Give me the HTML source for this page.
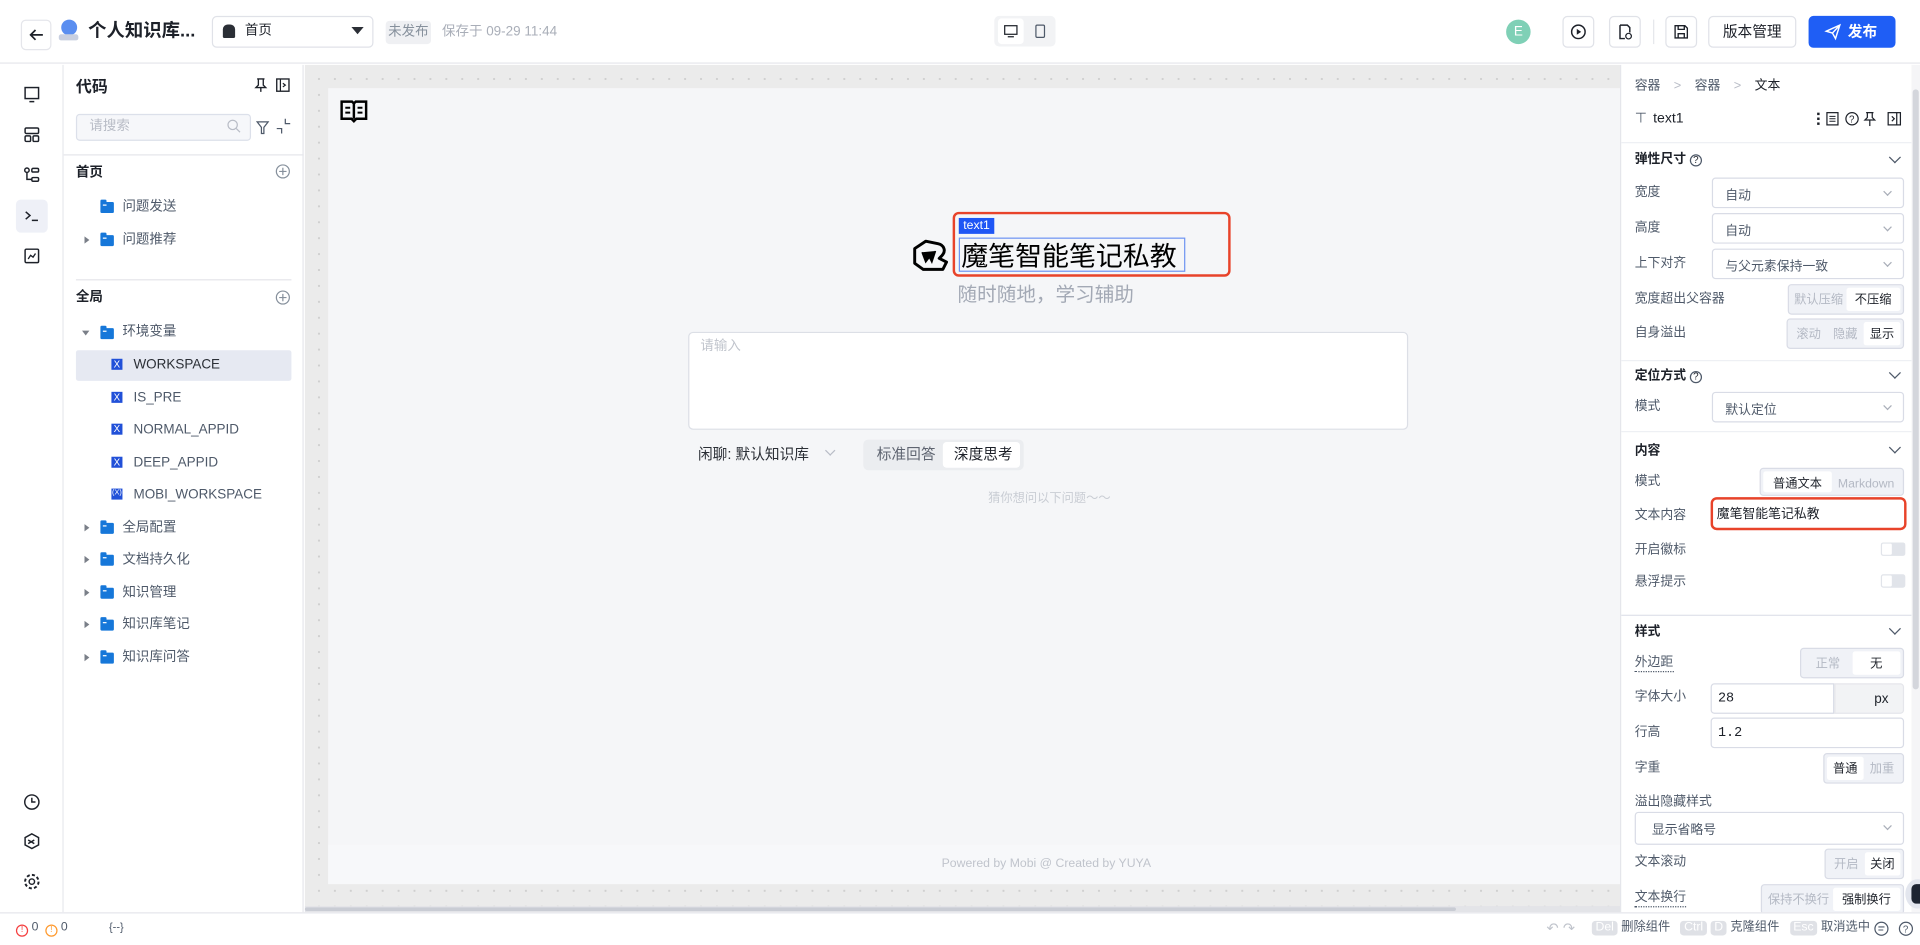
<!DOCTYPE html>
<html><head><meta charset="utf-8">
<style>
*{box-sizing:border-box;margin:0;padding:0}
html,body{width:1920px;height:945px;overflow:hidden;background:#fff}
body{font-family:"Liberation Sans","Noto Sans CJK SC",sans-serif;color:#1d2129}
#w{position:absolute;left:0;top:0;width:1568px;height:772px;transform:scale(1.22449);transform-origin:0 0;font-size:12px}
.a{position:absolute}
.t{position:absolute;white-space:nowrap;line-height:1}
.lbl{position:absolute;left:11px;color:#4e5969;font-size:10.5px;white-space:nowrap;line-height:1}
.sel{position:absolute;left:74px;width:157px;height:25px;border:1px solid #d9dce6;border-radius:3px;color:#4e5969;font-size:10.5px;padding:6px 10px;white-space:nowrap}
.sel:after{content:"";position:absolute;right:10px;top:8px;width:4px;height:4px;border-right:1px solid #a9aeb8;border-bottom:1px solid #a9aeb8;transform:rotate(45deg)}
.seg{position:absolute;height:25px;border:1px solid #d9dce6;background:#f0f2f7;border-radius:3px;display:flex;padding:2px;font-size:10px;color:#b4b9c4}
.seg span{flex:1;text-align:center;padding:4px 0;white-space:nowrap;line-height:13px}
.seg .on{background:#fff;color:#1d2129;border-radius:2px}
.sec{position:absolute;left:11px;font-weight:bold;font-size:10.5px;color:#1d2129;white-space:nowrap;line-height:1}
.chev{position:absolute;left:220px;width:7px;height:7px;border-right:1.3px solid #4e5969;border-bottom:1.3px solid #4e5969;transform:rotate(45deg)}
.q{display:inline-block;width:10px;height:10px;border:1px solid #4e5969;border-radius:50%;font-size:8px;text-align:center;line-height:8px;font-weight:normal;margin-left:3px;vertical-align:0}
.ti{position:absolute;font-size:11px;color:#4e5969;white-space:nowrap;line-height:1}
.fold{position:absolute;width:11px;height:9px;background:#1677d9;border-radius:1px}
.fold:before{content:"";position:absolute;left:0;top:-2px;width:5px;height:3px;background:#1677d9;border-radius:1px 1px 0 0}
.fold:after{content:"";position:absolute;left:2px;top:2px;width:3px;height:1px;background:#fff}
.arr{position:absolute;width:0;height:0;border-top:3px solid transparent;border-bottom:3px solid transparent;border-left:4px solid #7a7f88}
.xi{position:absolute;left:91px;width:9px;height:9px;background:#2150d8;color:#fff;font-size:8px;line-height:9px;text-align:center}
.kbd{display:inline-block;background:#dfe1e6;color:#fff;border-radius:3px;padding:1px 3px;font-size:10px;margin-right:3px}
</style></head><body><div id="w">

<!-- header -->
<div class="a" style="left:0;top:0;width:1568px;height:52px;border-bottom:1px solid #e5e6eb;background:#fff"></div>
<div class="a" style="left:17px;top:16px;width:25px;height:25px;border:1px solid #e5e6eb;border-radius:4px"></div>
<svg class="a" style="left:22px;top:21px" width="15" height="15" viewBox="0 0 15 15"><path d="M13 7.5H3M7 3.5L3 7.5l4 4" stroke="#1d2129" stroke-width="1.4" fill="none"/></svg>
<div class="a" style="left:50px;top:16px;width:13px;height:13px;border-radius:50%;background:#5a8ef0"></div>
<div class="a" style="left:48px;top:28px;width:16px;height:5px;border-radius:2px;background:#c8cfe0"></div>
<div class="t" style="left:72px;top:18px;font-size:15px;font-weight:bold">个人知识库...</div>
<div class="a" style="left:173px;top:13px;width:132px;height:26px;border:1px solid #e0e2e8;border-radius:4px"></div>
<div class="a" style="left:182px;top:20px;width:10px;height:11px;background:#2b2f36;border-radius:4px 4px 1px 1px"></div>
<div class="t" style="left:200px;top:20px;font-size:11px">首页</div>
<div class="a" style="left:287px;top:22px;border-left:5px solid transparent;border-right:5px solid transparent;border-top:6px solid #2b2f36"></div>
<div class="a" style="left:315px;top:17px;width:37px;height:19px;background:#eff0f3;border-radius:3px;color:#86909c;font-size:11px;line-height:19px;text-align:center">未发布</div>
<div class="t" style="left:361px;top:21px;font-size:11px;color:#a9aeb8">保存于 09-29 11:44</div>
<div class="a" style="left:812px;top:13px;width:50px;height:25px;background:#f2f3f5;border-radius:4px"></div>
<div class="a" style="left:815px;top:15px;width:21px;height:21px;background:#fff;border-radius:3px"></div>
<svg class="a" style="left:819px;top:19px" width="13" height="13" viewBox="0 0 13 13"><rect x="1.5" y="2" width="10" height="7" fill="none" stroke="#1d2129"/><path d="M4 11h5" stroke="#1d2129"/></svg>
<svg class="a" style="left:843px;top:19px" width="13" height="13" viewBox="0 0 13 13"><rect x="3" y="1.5" width="7" height="10" rx="1" fill="none" stroke="#4e5969"/></svg>
<div class="a" style="left:1230px;top:16px;width:20px;height:20px;border-radius:50%;background:#7fd0b6;color:#fff;font-size:11px;text-align:center;line-height:20px">E</div>
<div class="a" style="left:1276px;top:13px;width:26px;height:26px;border:1px solid #e0e2e8;border-radius:4px"></div>
<svg class="a" style="left:1282px;top:19px" width="14" height="14" viewBox="0 0 14 14"><circle cx="7" cy="7" r="5.5" fill="none" stroke="#1d2129" stroke-width="1.2"/><path d="M5.7 4.6v4.8l3.6-2.4z" fill="#1d2129"/></svg>
<div class="a" style="left:1314px;top:13px;width:26px;height:26px;border:1px solid #e0e2e8;border-radius:4px"></div>
<svg class="a" style="left:1320px;top:19px" width="14" height="14" viewBox="0 0 14 14"><path d="M3 1.5h6l2 2v4M3 1.5v11h4" fill="none" stroke="#1d2129" stroke-width="1.2"/><circle cx="10" cy="10.5" r="2.3" fill="none" stroke="#1d2129"/></svg>
<div class="a" style="left:1350px;top:16px;width:1px;height:20px;background:#e5e6eb"></div>
<div class="a" style="left:1360px;top:13px;width:26px;height:26px;border:1px solid #e0e2e8;border-radius:4px"></div>
<svg class="a" style="left:1366px;top:19px" width="14" height="14" viewBox="0 0 14 14"><path d="M2 2h8l2 2v8H2z M4.5 2v3h5V2 M4.5 12V8.5h5V12" fill="none" stroke="#1d2129" stroke-width="1.1"/></svg>
<div class="a" style="left:1395px;top:13px;width:72px;height:26px;border:1px solid #e0e2e8;border-radius:4px;font-size:12px;text-align:center;line-height:24px">版本管理</div>
<div class="a" style="left:1477px;top:13px;width:71px;height:26px;background:#1f5ef5;border-radius:4px;color:#fff;font-size:12px;font-weight:bold;line-height:26px;padding-left:32px">发布</div>
<svg class="a" style="left:1490px;top:19px" width="14" height="14" viewBox="0 0 14 14"><path d="M1.5 6.5L12.5 1.5 9 12.5 6.5 8z M6.5 8l6-6.5" fill="none" stroke="#fff" stroke-width="1.2"/></svg>

<!-- left rail -->
<div class="a" style="left:0;top:53px;width:52px;height:692px;border-right:1px solid #e5e6eb"></div>
<div class="a" style="left:13px;top:163px;width:26px;height:27px;background:#eef0f7;border-radius:4px"></div>
<svg class="a" style="left:18px;top:69px" width="16" height="16" viewBox="0 0 16 16"><rect x="2.5" y="2.5" width="11" height="9" fill="none" stroke="#1d2129" stroke-width="1.2"/><path d="M6 14h4" stroke="#1d2129" stroke-width="1.2"/></svg>
<svg class="a" style="left:18px;top:102px" width="16" height="16" viewBox="0 0 16 16"><rect x="2.5" y="2.5" width="11" height="4.5" rx="1" fill="none" stroke="#1d2129" stroke-width="1.2"/><rect x="2.5" y="9" width="4.5" height="4.5" rx="1" fill="none" stroke="#1d2129" stroke-width="1.2"/><rect x="9" y="9" width="4.5" height="4.5" rx="1" fill="none" stroke="#1d2129" stroke-width="1.2"/></svg>
<svg class="a" style="left:18px;top:135px" width="16" height="16" viewBox="0 0 16 16"><circle cx="4" cy="4" r="1.8" fill="none" stroke="#1d2129" stroke-width="1.2"/><rect x="8" y="2.5" width="5.5" height="3" rx="1" fill="none" stroke="#1d2129" stroke-width="1.2"/><rect x="8" y="10" width="5.5" height="3" rx="1" fill="none" stroke="#1d2129" stroke-width="1.2"/><path d="M4 6v5.5h4" fill="none" stroke="#1d2129" stroke-width="1.2"/></svg>
<svg class="a" style="left:18px;top:168px" width="16" height="16" viewBox="0 0 16 16"><path d="M3 5l3.5 3L3 11M8 12h5" fill="none" stroke="#1d2129" stroke-width="1.2"/></svg>
<svg class="a" style="left:18px;top:201px" width="16" height="16" viewBox="0 0 16 16"><rect x="2.5" y="2.5" width="11" height="11" rx="1" fill="none" stroke="#1d2129" stroke-width="1.2"/><path d="M5 10.5l2-3 2 1.5 2-3" fill="none" stroke="#1d2129" stroke-width="1.1"/></svg>
<svg class="a" style="left:18px;top:647px" width="16" height="16" viewBox="0 0 16 16"><circle cx="8" cy="8" r="5.8" fill="none" stroke="#1d2129" stroke-width="1.2"/><path d="M8 4.5V8h3" fill="none" stroke="#1d2129" stroke-width="1.2"/></svg>
<svg class="a" style="left:18px;top:679px" width="16" height="16" viewBox="0 0 16 16"><path d="M8 2l5.5 3v6L8 14l-5.5-3V5z M5 7l5 3M5 10l5-3" fill="none" stroke="#1d2129" stroke-width="1.2"/></svg>
<svg class="a" style="left:18px;top:712px" width="16" height="16" viewBox="0 0 16 16"><circle cx="8" cy="8" r="2.2" fill="none" stroke="#1d2129" stroke-width="1.2"/><circle cx="8" cy="8" r="5.5" fill="none" stroke="#1d2129" stroke-width="1.6" stroke-dasharray="2.5 1.8"/></svg>

<!-- left panel -->
<div class="a" style="left:52px;top:53px;width:196px;height:692px;border-right:1px solid #e5e6eb;background:#fff"></div>
<div class="t" style="left:62px;top:64px;font-size:13px;font-weight:bold">代码</div>
<svg class="a" style="left:207px;top:63px" width="12" height="13" viewBox="0 0 12 13"><path d="M3 1.5h6M4 1.5v5l-2 2h8l-2-2v-5M6 8.5V12" fill="none" stroke="#1d2129" stroke-width="1.1"/></svg>
<svg class="a" style="left:225px;top:63px" width="12" height="13" viewBox="0 0 12 13"><rect x="1" y="1.5" width="10" height="10" fill="none" stroke="#1d2129" stroke-width="1.1"/><path d="M4 1.5v10M6 5l2 1.5L6 8" fill="none" stroke="#1d2129"/></svg>
<div class="a" style="left:62px;top:93px;width:143px;height:22px;border:1px solid #dce0ea;border-radius:3px;background:#f6f7fa"></div>
<div class="t" style="left:73px;top:98px;font-size:11px;color:#b8bcc6">请搜索</div>
<svg class="a" style="left:185px;top:97px" width="12" height="12" viewBox="0 0 12 12"><circle cx="5" cy="5" r="3.8" fill="none" stroke="#b8bcc6"/><path d="M8 8l3 3" stroke="#b8bcc6"/></svg>
<svg class="a" style="left:209px;top:98px" width="11" height="12" viewBox="0 0 11 12"><path d="M1 1.5h9L6.5 6v5h-2V6z" fill="none" stroke="#4e5969"/></svg>
<svg class="a" style="left:225px;top:96px" width="13" height="14" viewBox="0 0 13 14"><path d="M8 1v4h4M5 13V9H1" fill="none" stroke="#4e5969"/></svg>
<div class="a" style="left:52px;top:126px;width:196px;height:1px;background:#e5e6eb"></div>
<div class="t" style="left:62px;top:136px;font-size:11px;font-weight:bold">首页</div>
<svg class="a" style="left:225px;top:134px" width="12" height="12" viewBox="0 0 12 12"><circle cx="6" cy="6" r="5.3" fill="none" stroke="#86909c"/><path d="M6 3v6M3 6h6" stroke="#86909c"/></svg>
<div class="fold" style="left:82px;top:165px"></div><div class="ti" style="left:100px;top:164px">问题发送</div>
<div class="arr" style="left:69px;top:193px"></div><div class="fold" style="left:82px;top:192px"></div><div class="ti" style="left:100px;top:191px">问题推荐</div>
<div class="a" style="left:62px;top:228px;width:176px;height:1px;background:#e5e6eb"></div>
<div class="t" style="left:62px;top:238px;font-size:11px;font-weight:bold">全局</div>
<svg class="a" style="left:225px;top:237px" width="12" height="12" viewBox="0 0 12 12"><circle cx="6" cy="6" r="5.3" fill="none" stroke="#86909c"/><path d="M6 3v6M3 6h6" stroke="#86909c"/></svg>
<div class="a" style="left:67px;top:270px;border-left:3px solid transparent;border-right:3px solid transparent;border-top:4px solid #7a7f88"></div>
<div class="fold" style="left:82px;top:268px"></div><div class="ti" style="left:100px;top:266px">环境变量</div>
<div class="a" style="left:62px;top:286px;width:176px;height:25px;background:#e6e9f2;border-radius:2px"></div>
<div class="xi" style="top:293px">X</div><div class="ti" style="left:109px;top:293px;color:#2b2f36">WORKSPACE</div>
<div class="xi" style="top:320px">X</div><div class="ti" style="left:109px;top:320px">IS_PRE</div>
<div class="xi" style="top:346px">X</div><div class="ti" style="left:109px;top:346px">NORMAL_APPID</div>
<div class="xi" style="top:373px">X</div><div class="ti" style="left:109px;top:373px">DEEP_APPID</div>
<div class="xi" style="top:399px;font-size:6px">(X)</div><div class="ti" style="left:109px;top:399px">MOBI_WORKSPACE</div>
<div class="arr" style="left:69px;top:428px"></div><div class="fold" style="left:82px;top:427px"></div><div class="ti" style="left:100px;top:426px">全局配置</div>
<div class="arr" style="left:69px;top:454px"></div><div class="fold" style="left:82px;top:453px"></div><div class="ti" style="left:100px;top:452px">文档持久化</div>
<div class="arr" style="left:69px;top:481px"></div><div class="fold" style="left:82px;top:480px"></div><div class="ti" style="left:100px;top:479px">知识管理</div>
<div class="arr" style="left:69px;top:507px"></div><div class="fold" style="left:82px;top:506px"></div><div class="ti" style="left:100px;top:505px">知识库笔记</div>
<div class="arr" style="left:69px;top:534px"></div><div class="fold" style="left:82px;top:533px"></div><div class="ti" style="left:100px;top:532px">知识库问答</div>

<!-- canvas -->
<div class="a" style="left:249px;top:53px;width:1074px;height:692px;background-color:#ebebeb;background-image:radial-gradient(#cfcfcf 0.8px,transparent 1px);background-size:13px 13px;background-position:5px 5px"></div>
<div class="a" style="left:268px;top:72px;width:1055px;height:650px;background:#f5f6f8"></div>
<div class="a" style="left:268px;top:690px;width:1055px;height:32px;background:#f7f8fa"></div>
<div class="a" style="left:249px;top:740px;width:1074px;height:5px;background:#e3e4e8"></div>
<div class="a" style="left:249px;top:741px;width:940px;height:3px;background:#c9ccd4;border-radius:2px"></div>
<svg class="a" style="left:277px;top:81px" width="24" height="20" viewBox="0 0 24 20"><path d="M2 2h8.5l1.5 1.5L13.5 2H22v14h-8l-2 2-2-2H2z M12 3.5V16" fill="none" stroke="#000" stroke-width="2"/><path d="M5 7h4M5 11h4M15 7h4M15 11h4" stroke="#000" stroke-width="1.6"/></svg>
<svg class="a" style="left:745px;top:194px" width="31" height="29" viewBox="0 0 31 29"><path d="M2 9l9-6 10 2c5 1 7 6 3 10l-2 2 6 3-3 6H9l-7-5z" fill="none" stroke="#000" stroke-width="2.4" stroke-linejoin="round"/><path d="M8 12l3 8 3-4 2 4 3-9" fill="#000" stroke="#000" stroke-width="1.2"/></svg>
<div class="a" style="left:778px;top:173px;width:227px;height:53px;border:2px solid #e8432a;border-radius:5px"></div>
<div class="a" style="left:783px;top:178px;width:29px;height:13px;background:#1f56f5;color:#fff;font-size:10px;line-height:13px;text-align:center">text1</div>
<div class="a" style="left:783px;top:194px;width:185px;height:28px;border:1px solid #6f95f2"></div>
<div class="t" style="left:785px;top:195px;font-size:22px;color:#000;font-family:'Noto Sans CJK SC',sans-serif;line-height:26px">魔笔智能笔记私教</div>
<div class="t" style="left:782px;top:234px;font-size:16px;color:#a3a9b5">随时随地，学习辅助</div>
<div class="a" style="left:562px;top:271px;width:588px;height:80px;background:#fff;border:1px solid #dcdfe6;border-radius:4px"></div>
<div class="t" style="left:572px;top:278px;font-size:11px;color:#c0c4cc">请输入</div>
<div class="t" style="left:570px;top:365px;font-size:12px;color:#2b2f36">闲聊: 默认知识库</div>
<div class="a" style="left:675px;top:365px;width:6px;height:6px;border-right:1px solid #b8bcc6;border-bottom:1px solid #b8bcc6;transform:rotate(45deg)"></div>
<div class="a" style="left:705px;top:359px;width:131px;height:25px;background:#ebedf0;border-radius:4px"></div>
<div class="t" style="left:716px;top:365px;font-size:12px;color:#5e6470">标准回答</div>
<div class="a" style="left:770px;top:361px;width:63px;height:21px;background:#fff;border-radius:3px"></div>
<div class="t" style="left:779px;top:365px;font-size:12px;color:#1d2129">深度思考</div>
<div class="t" style="left:807px;top:403px;font-size:10px;color:#c9cdd4">猜你想问以下问题～～</div>
<div class="t" style="left:769px;top:701px;font-size:10px;color:#c0c4cc">Powered by Mobi @ Created by YUYA</div>

<!-- right panel -->
<div class="a" style="left:1323px;top:53px;width:245px;height:692px;background:#fff;border-left:1px solid #e5e6eb">
 <div class="t" style="left:11px;top:12px;font-size:10.5px;color:#4e5969">容器 <span style="color:#b8bcc6;margin:0 8px">&gt;</span> 容器 <span style="color:#b8bcc6;margin:0 8px">&gt;</span> <span style="color:#1d2129">文本</span></div>
 <div class="t" style="left:11px;top:39px;font-size:11.5px;color:#1d2129"><span style="color:#4e5969;margin-right:5px">⊤</span>text1</div>
 <div class="a" style="left:160px;top:39px;width:2px;height:2px;background:#1d2129;box-shadow:0 4px 0 #1d2129,0 8px 0 #1d2129"></div>
 <svg class="a" style="left:167px;top:38px" width="72" height="12" viewBox="0 0 72 12"><rect x="1" y="1" width="9" height="10" fill="none" stroke="#1d2129"/><path d="M3 4h5M3 6h5M3 8h5" stroke="#1d2129" stroke-width=".8"/><circle cx="21.5" cy="6" r="5" fill="none" stroke="#1d2129"/><text x="19" y="9" font-size="8" fill="#1d2129" font-family="Liberation Sans">?</text><path d="M33 1h6M34 1v4l-2 2h8l-2-2V1M36 7v5" fill="none" stroke="#1d2129"/><rect x="51" y="1" width="10" height="10" fill="none" stroke="#1d2129"/><path d="M58 1v10M54 4l2 2-2 2" fill="none" stroke="#1d2129"/></svg>
 <div class="a" style="left:0;top:63px;width:237px;height:1px;background:#eef0f4"></div>
 <div class="sec" style="top:72px">弹性尺寸<span class="q">?</span></div><div class="chev" style="top:72px"></div>
 <div class="lbl" style="top:99px">宽度</div><div class="sel" style="top:92px">自动</div>
 <div class="lbl" style="top:128px">高度</div><div class="sel" style="top:121px">自动</div>
 <div class="lbl" style="top:157px">上下对齐</div><div class="sel" style="top:150px">与父元素保持一致</div>
 <div class="lbl" style="top:186px">宽度超出父容器</div><div class="seg" style="left:136px;top:179px;width:95px"><span>默认压缩</span><span class="on">不压缩</span></div>
 <div class="lbl" style="top:214px">自身溢出</div><div class="seg" style="left:135px;top:207px;width:96px"><span>滚动</span><span>隐藏</span><span class="on">显示</span></div>
 <div class="a" style="left:0;top:241px;width:237px;height:1px;background:#eef0f4"></div>
 <div class="sec" style="top:249px">定位方式<span class="q">?</span></div><div class="chev" style="top:248px"></div>
 <div class="lbl" style="top:274px">模式</div><div class="sel" style="top:267px">默认定位</div>
 <div class="a" style="left:0;top:299px;width:237px;height:1px;background:#eef0f4"></div>
 <div class="sec" style="top:310px">内容</div><div class="chev" style="top:309px"></div>
 <div class="lbl" style="top:335px">模式</div><div class="seg" style="left:113px;top:329px;width:118px;height:23px"><span class="on">普通文本</span><span>Markdown</span></div>
 <div class="a" style="left:73px;top:353px;width:160px;height:27px;border:2.5px solid #e8432a;border-radius:5px"></div>
 <div class="lbl" style="top:363px">文本内容</div><div class="t" style="left:78px;top:362px;font-size:10.5px;color:#1d2129">魔笔智能笔记私教</div>
 <div class="lbl" style="top:391px">开启徽标</div><div class="a" style="left:212px;top:390px;width:20px;height:11px;background:#e1e4ea;border-radius:2px"><div class="a" style="left:1px;top:1px;width:8px;height:9px;background:#fff;border-radius:1px"></div></div>
 <div class="lbl" style="top:417px">悬浮提示</div><div class="a" style="left:212px;top:416px;width:20px;height:11px;background:#e1e4ea;border-radius:2px"><div class="a" style="left:1px;top:1px;width:8px;height:9px;background:#fff;border-radius:1px"></div></div>
 <div class="a" style="left:0;top:449px;width:237px;height:1px;background:#dfe2ea"></div>
 <div class="sec" style="top:458px">样式</div><div class="chev" style="top:457px"></div>
 <div class="lbl" style="top:483px;border-bottom:1px dotted #4e5969;padding-bottom:1px">外边距</div>
 <div class="t" style="left:165px;top:483px;font-size:11px;color:#b8bcc6;font-style:italic">fx</div>
 <div class="seg" style="left:146px;top:476px;width:85px"><span>正常</span><span class="on">无</span></div>
 <div class="lbl" style="top:511px">字体大小</div>
 <div class="a" style="left:73px;top:505px;width:101px;height:25px;border:1px solid #d9dce6;border-radius:3px 0 0 3px;font-family:'Liberation Mono',monospace;font-size:11px;padding:6px 5px">28</div>
 <div class="a" style="left:174px;top:505px;width:57px;height:25px;background:#f2f3f5;border:1px solid #e5e6eb;border-radius:0 3px 3px 0;font-size:11px;text-align:center;padding-top:6px;padding-left:20px">px</div>
 <div class="lbl" style="top:540px">行高</div>
 <div class="a" style="left:73px;top:533px;width:158px;height:25px;border:1px solid #d9dce6;border-radius:3px;font-family:'Liberation Mono',monospace;font-size:11px;padding:6px 5px">1.2</div>
 <div class="lbl" style="top:569px">字重</div><div class="seg" style="left:165px;top:562px;width:66px"><span class="on">普通</span><span>加重</span></div>
 <div class="lbl" style="top:597px">溢出隐藏样式</div>
 <div class="sel" style="left:11px;top:610px;width:220px;height:27px;padding-left:13px">显示省略号</div>
 <div class="lbl" style="top:646px">文本滚动</div><div class="seg" style="left:166px;top:640px;width:65px"><span>开启</span><span class="on">关闭</span></div>
 <div class="lbl" style="top:675px;border-bottom:1px dotted #4e5969;padding-bottom:1px">文本换行</div><div class="seg" style="left:114px;top:669px;width:117px"><span>保持不换行</span><span class="on">强制换行</span></div>
 <div class="a" style="left:237px;top:0;width:8px;height:692px;background:#f5f5f7"></div>
 <div class="a" style="left:238px;top:20px;width:5px;height:490px;background:#d4d6dc;border-radius:3px"></div>
</div>
<div class="a" style="left:1556px;top:718px;width:20px;height:24px;border-radius:50%;background:#e3e6ee"></div>
<div class="a" style="left:1561px;top:722px;width:14px;height:16px;border-radius:4px;background:#1e2532"></div>

<!-- bottom bar -->
<div class="a" style="left:0;top:745px;width:1568px;height:27px;background:#fff;border-top:1px solid #e5e6eb"></div>
<div class="t" style="left:13px;top:753px;font-size:10px;color:#4e5969"><span style="display:inline-block;width:10px;height:10px;border:1px solid #f53f3f;border-radius:50%;color:#f53f3f;font-size:7px;text-align:center;line-height:8px;vertical-align:-1px">!</span> 0 &nbsp;<span style="display:inline-block;width:10px;height:10px;border:1px solid #ff9a2e;border-radius:50%;color:#ff9a2e;font-size:7px;text-align:center;line-height:8px;vertical-align:-1px">!</span> 0</div>
<div class="t" style="left:89px;top:753px;font-size:9px;color:#4e5969">{--}</div>
<div class="t" style="left:1263px;top:752px;font-size:12px;color:#c0c4cc">↶ ↷</div>
<div class="t" style="left:1300px;top:752px;font-size:10px;color:#4e5969"><span class="kbd">Del</span>删除组件 &nbsp;&nbsp;<span class="kbd">Ctrl</span><span class="kbd">D</span>克隆组件 &nbsp;&nbsp;<span class="kbd">Esc</span>取消选中</div>
<svg class="a" style="left:1530px;top:752px" width="34" height="13" viewBox="0 0 34 13"><circle cx="6.5" cy="6.5" r="5.3" fill="none" stroke="#4e5969"/><path d="M4 5h5M4 7.5h4" stroke="#4e5969" stroke-width=".9"/><circle cx="26.5" cy="6.5" r="5.3" fill="none" stroke="#4e5969"/><text x="24" y="9.5" font-size="8" fill="#4e5969" font-family="Liberation Sans">?</text></svg>
</div></body></html>
